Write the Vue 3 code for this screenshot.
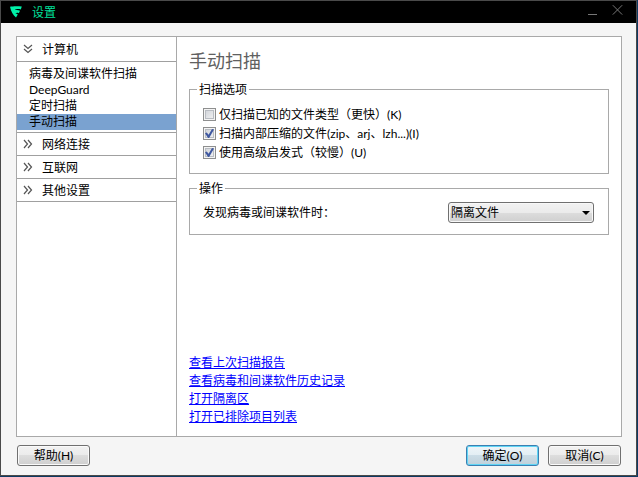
<script setup>
import { ref } from 'vue'

const scanItems = ['病毒及间谍软件扫描', 'DeepGuard', '定时扫描', '手动扫描']
const activeItem = ref('手动扫描')
const groups = ['网络连接', '互联网', '其他设置']
const options = ref([
  { id: 'known', label: '仅扫描已知的文件类型（更快）(K)', checked: false },
  { id: 'archive', label: '扫描内部压缩的文件(zip、arj、lzh...)(I)', checked: true },
  { id: 'heuristic', label: '使用高级启发式（较慢）(U)', checked: true },
])
const links = ['查看上次扫描报告', '查看病毒和间谍软件历史记录', '打开隔离区', '打开已排除项目列表']
const action = ref('隔离文件')
</script>

<template>
  <div class="desktop">
    <div class="window">
      <header class="titlebar">
        <svg class="logo" width="12" height="12" viewBox="0 0 12 12" aria-hidden="true">
          <path d="M0 .8C3 0 8 0 11.8 .6L10.8 3.4C8.5 2.7 6 2.9 4.8 4.1C7 3.7 8.8 4 10 4.8L8.8 7.2C7.6 6.6 6.2 6.7 5.4 7.4C6.4 7.5 7.2 7.9 7.8 8.5L6 11.5C3.2 9.5 .8 5.4 0 .8Z" />
        </svg>
        <span class="caption">设置</span>
        <button class="tool" type="button" aria-label="最小化">
          <svg width="11" height="12" viewBox="0 0 11 12"><path d="M1 10.5H10" /></svg>
        </button>
        <button class="tool" type="button" aria-label="关闭">
          <svg width="11" height="12" viewBox="0 0 11 12"><path d="M.8 1.2L10.2 10.6M10.2 1.2L.8 10.6" /></svg>
        </button>
      </header>

      <main class="body">
        <div class="panel">
          <nav class="sidebar">
            <button class="group" type="button">
              <svg width="10" height="10" viewBox="0 0 10 10"><path d="M1 1L5 4.5L9 1M1 5L5 8.5L9 5" /></svg>
              <span>计算机</span>
            </button>
            <ul class="items">
              <li v-for="item in scanItems" :key="item">
                <a href="#" :class="{ active: item === activeItem }" @click.prevent="activeItem = item">{{ item }}</a>
              </li>
            </ul>
            <button v-for="g in groups" :key="g" class="group closed" type="button">
              <svg width="10" height="10" viewBox="0 0 10 10"><path d="M1 1L4.5 5L1 9M5 1L8.5 5L5 9" /></svg>
              <span>{{ g }}</span>
            </button>
          </nav>

          <section class="content">
            <h1>手动扫描</h1>
            <fieldset class="options">
              <legend>扫描选项</legend>
              <div v-for="o in options" :key="o.id" class="option">
                <input :id="o.id" v-model="o.checked" type="checkbox">
                <label :for="o.id">{{ o.label }}</label>
              </div>
            </fieldset>
            <fieldset>
              <legend>操作</legend>
              <div class="action">
                <label for="action">发现病毒或间谍软件时：</label>
                <span class="combo">
                  <select id="action" v-model="action">
                    <option>隔离文件</option>
                  </select>
                  <svg width="8" height="4" viewBox="0 0 8 4" aria-hidden="true"><path d="M0 0H8L4 4Z" /></svg>
                </span>
              </div>
            </fieldset>
            <ul class="links">
              <li v-for="l in links" :key="l"><a href="#">{{ l }}</a></li>
            </ul>
          </section>
        </div>

        <footer class="footer">
          <button class="btn help" type="button">帮助(H)</button>
          <button class="btn primary" type="button">确定(O)</button>
          <button class="btn" type="button">取消(C)</button>
        </footer>
      </main>
    </div>
  </div>
</template>

<style>
body {
  margin: 0;
}
</style>

<style scoped>
.desktop {
  box-sizing: border-box;
  display: flex;
  min-height: 100vh;
  padding: 0 1px 1px 0;
  background: #0e3a63;
  color: #000;
  font: 12px/16px Lato, "Noto Sans CJK SC", sans-serif;
}
.desktop * {
  box-sizing: border-box;
}
button,
select {
  font: inherit;
  color: inherit;
}
.window {
  flex: 1;
  display: flex;
  flex-direction: column;
  border: 1px solid #4a4a4a;
  background: #f5f5f5;
}
.titlebar {
  display: flex;
  align-items: center;
  height: 22px;
  padding: 0 13px 0 9px;
  background: #000;
}
.logo {
  fill: #00f0a8;
}
.caption {
  flex: 1;
  margin-left: 10px;
  padding-top: 1px;
  color: #00e09c;
}
.tool {
  display: flex;
  margin-left: 14px;
  padding: 0 0 4px;
  border: 0;
  background: none;
}
.tool svg {
  fill: none;
  stroke: #777;
}
.body {
  flex: 1;
  display: flex;
  flex-direction: column;
  padding: 13px 14px 9px 15px;
}
.panel {
  flex: 1;
  display: flex;
  border: 1px solid #a9a9a9;
  background: #fff;
}
.sidebar {
  flex: none;
  width: 160px;
  border-right: 1px solid #a9a9a9;
}
.group {
  display: flex;
  align-items: center;
  width: 100%;
  height: 25px;
  padding: 0 6px;
  border: 0;
  border-bottom: 1px solid #a0a0a0;
  background: #fff;
}
.group.closed {
  height: 23px;
}
.group span {
  padding-top: 2px;
}
.group svg {
  margin-right: 9px;
  fill: none;
  stroke: #555;
  stroke-width: 1.2;
}
.items {
  margin: 0;
  padding: 4px 0 2px;
  border-bottom: 1px solid #a0a0a0;
  list-style: none;
}
.items a {
  display: block;
  height: 16px;
  padding-left: 12px;
  color: #000;
  text-decoration: none;
}
.items a.active {
  background: #7aa2d0;
}
.content {
  flex: 1;
  display: flex;
  flex-direction: column;
  padding: 12px 12px 10px;
}
h1 {
  margin: 0 0 9px;
  color: #606060;
  font-size: 18px;
  font-weight: 400;
  line-height: 24px;
}
fieldset {
  min-width: 0;
  margin: 0 0 7px;
  padding: 6px 14px 11px 7px;
  border: 1px solid #a9a9a9;
}
fieldset.options {
  padding: 8px 7px 11px;
}
legend {
  padding: 0 2px;
  line-height: 15px;
}
.option {
  display: flex;
  align-items: center;
  height: 19px;
  padding-left: 6px;
}
.option input {
  display: flex;
  appearance: none;
  width: 13px;
  height: 13px;
  margin: 0 3px 0 0;
  border: 1px solid #8e8f8f;
  background: linear-gradient(135deg, #cbcfd5, #f6f6f6);
  box-shadow: inset 0 0 0 1px #f4f4f4, inset 0 0 0 2px #b8bcc2;
}
.option input:checked::before {
  content: "";
  width: 9px;
  height: 9px;
  margin: 1px;
  background: #3f58a0;
  clip-path: polygon(0 48%, 20% 38%, 40% 65%, 78% 0, 100% 6%, 46% 100%, 34% 100%);
}
.action {
  display: flex;
  align-items: center;
  justify-content: space-between;
  padding-left: 6px;
}
.combo {
  position: relative;
  display: flex;
  width: 146px;
}
.combo select {
  appearance: none;
  width: 100%;
  height: 21px;
  padding: 1px 20px 0 2px;
  border: 1px solid #707070;
  border-radius: 3px;
  background: linear-gradient(#f2f2f2, #ebebeb 50%, #dddddd 50%, #cfcfcf);
  box-shadow: inset 0 0 0 1px #f8f8f8;
}
.combo svg {
  position: absolute;
  top: 9px;
  right: 4px;
  pointer-events: none;
}
.links {
  margin: auto 0 0;
  padding: 0;
  list-style: none;
  line-height: 18px;
}
.links a {
  color: #00f;
  text-underline-offset: 1px;
}
.footer {
  display: flex;
  gap: 9px;
  padding: 8px 1px 0;
}
.btn {
  width: 73px;
  height: 21px;
  padding: 1px 0 0;
  border: 1px solid #707070;
  border-radius: 3px;
  background: linear-gradient(#f2f2f2, #ebebeb 50%, #dddddd 50%, #cfcfcf);
  box-shadow: inset 0 0 0 1px #fafafa;
}
.help {
  margin-right: auto;
}
.primary {
  border-color: #3c7fb1;
  background: linear-gradient(#eef5f9, #e2eef4 50%, #cbdde7 50%, #bfd0da);
  box-shadow: inset 0 0 0 1px #5fd5f5;
}
</style>
